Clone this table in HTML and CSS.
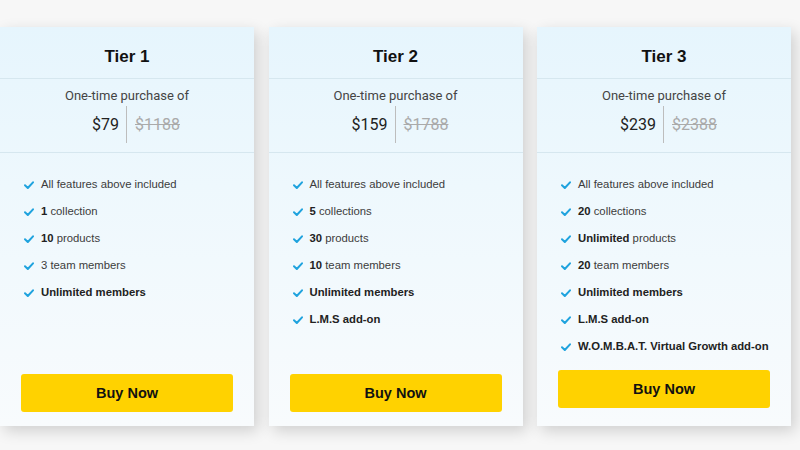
FILE: index.html
```html
<!DOCTYPE html>
<html lang="en">
<head>
<meta charset="utf-8">
<title>Pricing tiers</title>
<link rel="stylesheet" href="styles.css">
</head>
<body>
<main class="tiers">
  <section class="card">
    <h2 class="card-title">Tier 1</h2>
    <div class="price-box">
      <p class="price-label">One-time purchase of</p>
      <div class="price-row"><span class="price-now">$79</span><span class="price-old">$1188</span></div>
    </div>
    <ul class="features">
      <li><svg class="check" viewBox="0 0 10 8"><polyline points="1,4.3 3.8,7 9,1.3"/></svg><span>All features above included</span></li>
      <li><svg class="check" viewBox="0 0 10 8"><polyline points="1,4.3 3.8,7 9,1.3"/></svg><span><b>1</b> collection</span></li>
      <li><svg class="check" viewBox="0 0 10 8"><polyline points="1,4.3 3.8,7 9,1.3"/></svg><span><b>10</b> products</span></li>
      <li><svg class="check" viewBox="0 0 10 8"><polyline points="1,4.3 3.8,7 9,1.3"/></svg><span>3 team members</span></li>
      <li><svg class="check" viewBox="0 0 10 8"><polyline points="1,4.3 3.8,7 9,1.3"/></svg><span><b>Unlimited members</b></span></li>
    </ul>
    <button class="buy">Buy Now</button>
  </section>
  <section class="card">
    <h2 class="card-title">Tier 2</h2>
    <div class="price-box">
      <p class="price-label">One-time purchase of</p>
      <div class="price-row"><span class="price-now">$159</span><span class="price-old">$1788</span></div>
    </div>
    <ul class="features">
      <li><svg class="check" viewBox="0 0 10 8"><polyline points="1,4.3 3.8,7 9,1.3"/></svg><span>All features above included</span></li>
      <li><svg class="check" viewBox="0 0 10 8"><polyline points="1,4.3 3.8,7 9,1.3"/></svg><span><b>5</b> collections</span></li>
      <li><svg class="check" viewBox="0 0 10 8"><polyline points="1,4.3 3.8,7 9,1.3"/></svg><span><b>30</b> products</span></li>
      <li><svg class="check" viewBox="0 0 10 8"><polyline points="1,4.3 3.8,7 9,1.3"/></svg><span><b>10</b> team members</span></li>
      <li><svg class="check" viewBox="0 0 10 8"><polyline points="1,4.3 3.8,7 9,1.3"/></svg><span><b>Unlimited members</b></span></li>
      <li><svg class="check" viewBox="0 0 10 8"><polyline points="1,4.3 3.8,7 9,1.3"/></svg><span><b>L.M.S add-on</b></span></li>
    </ul>
    <button class="buy">Buy Now</button>
  </section>
  <section class="card card-long">
    <h2 class="card-title">Tier 3</h2>
    <div class="price-box">
      <p class="price-label">One-time purchase of</p>
      <div class="price-row"><span class="price-now">$239</span><span class="price-old">$2388</span></div>
    </div>
    <ul class="features">
      <li><svg class="check" viewBox="0 0 10 8"><polyline points="1,4.3 3.8,7 9,1.3"/></svg><span>All features above included</span></li>
      <li><svg class="check" viewBox="0 0 10 8"><polyline points="1,4.3 3.8,7 9,1.3"/></svg><span><b>20</b> collections</span></li>
      <li><svg class="check" viewBox="0 0 10 8"><polyline points="1,4.3 3.8,7 9,1.3"/></svg><span><b>Unlimited</b> products</span></li>
      <li><svg class="check" viewBox="0 0 10 8"><polyline points="1,4.3 3.8,7 9,1.3"/></svg><span><b>20</b> team members</span></li>
      <li><svg class="check" viewBox="0 0 10 8"><polyline points="1,4.3 3.8,7 9,1.3"/></svg><span><b>Unlimited members</b></span></li>
      <li><svg class="check" viewBox="0 0 10 8"><polyline points="1,4.3 3.8,7 9,1.3"/></svg><span><b>L.M.S add-on</b></span></li>
      <li><svg class="check" viewBox="0 0 10 8"><polyline points="1,4.3 3.8,7 9,1.3"/></svg><span><b>W.O.M.B.A.T. Virtual Growth add-on</b></span></li>
    </ul>
    <button class="buy">Buy Now</button>
  </section>
</main>
</body>
</html>
```
FILE: styles.css
```css
* { box-sizing: border-box; }

html, body {
  margin: 0;
  height: 100%;
}

body {
  background: #f7f7f7;
  font-family: "Liberation Sans", Arial, sans-serif;
  color: #333;
  overflow: hidden;
}

.tiers {
  display: flex;
  gap: 14.5px;
  padding-top: 27px;
}

.card {
  width: 254px;
  height: 399px;
  display: flex;
  flex-direction: column;
  background: linear-gradient(180deg, #e6f5fd 0%, #eef8fd 40%, #f8fbfd 100%);
  box-shadow: 4px 5px 14px rgba(0, 0, 0, 0.16);
  padding-bottom: 14px;
}

.card-long { padding-bottom: 18px; }

.card-title {
  flex-shrink: 0;
  margin: 0;
  height: 52px;
  display: flex;
  align-items: center;
  justify-content: center;
  padding-top: 8px;
  font-size: 17px;
  font-weight: bold;
  color: #111;
  border-bottom: 1px solid #d6e7ef;
}

.price-box {
  flex-shrink: 0;
  height: 74px;
  border-bottom: 1px solid #d6e7ef;
  display: flex;
  flex-direction: column;
  align-items: stretch;
  padding-top: 8px;
}

.price-label {
  margin: 0;
  text-align: center;
  font-family: Roboto, "Liberation Sans", sans-serif;
  font-size: 13px;
  line-height: 17px;
  color: #444;
}

.price-row {
  display: grid;
  grid-template-columns: 1fr 1fr;
  align-items: center;
  margin-top: 2px;
  height: 37px;
  font-family: Roboto, "Liberation Sans", sans-serif;
  font-size: 16px;
}

.price-now {
  text-align: right;
  color: #222;
  padding-right: 7px;
  border-right: 1px solid #bdbdbd;
  line-height: 37px;
}

.price-old {
  color: #aaa;
  padding-left: 8px;
  text-decoration: line-through;
}

.features {
  list-style: none;
  margin: 0 0 11px;
  padding: 17px 0 0 24px;
  flex: 1;
}

.features li {
  display: flex;
  align-items: center;
  height: 27px;
  font-size: 11.3px;
  color: #3c3c3c;
}

.features b { color: #222; }

.check {
  flex-shrink: 0;
  width: 10px;
  height: 8px;
  margin-right: 7px;
  margin-top: 3px;
  fill: none;
  stroke: #1fa3de;
  stroke-width: 2;
  stroke-linecap: round;
  stroke-linejoin: round;
}

.buy {
  flex-shrink: 0;
  margin: 0 21px;
  height: 38px;
  border: 0;
  border-radius: 3px;
  background: #ffd200;
  color: #111;
  font-family: "Liberation Sans", Arial, sans-serif;
  font-size: 14.5px;
  font-weight: bold;
  cursor: pointer;
}
```
